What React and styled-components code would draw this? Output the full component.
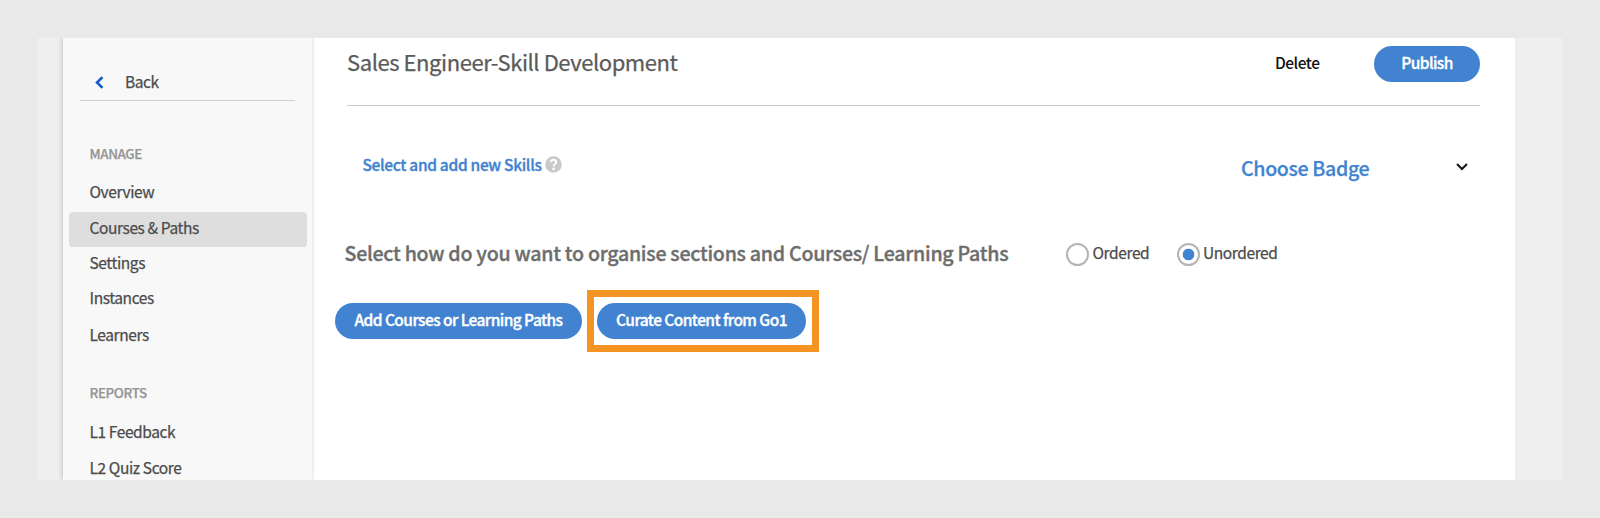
import React from "react";
import styled, { createGlobalStyle } from "styled-components";

const Global = createGlobalStyle`
  * { box-sizing: border-box; }
  body {
    margin: 0;
    background: #e9e9e9;
    font-family: "Noto Sans CJK SC", "Noto Sans", sans-serif;
    font-size: 15.5px;
    letter-spacing: -0.4px;
    color: #4b4b4b;
    -webkit-text-stroke: 0.25px currentColor;
  }
`;

const Page = styled.div`
  height: 518px;
  padding: 38px;
  overflow: hidden;
  background: #e9e9e9;
`;
const Frame = styled.div`
  display: flex;
  width: 1524px;
  height: 442px;
  padding-left: 25px;
  background: #efefef;
  overflow: hidden;
`;
const Window = styled.div`
  display: flex;
  width: 1452px;
  background: #fff;
  box-shadow: -1px 0 5px rgba(0, 0, 0, 0.16);
  clip-path: inset(0 0 0 -12px);
`;
const Sidebar = styled.nav`
  width: 249px;
  flex: none;
  padding: 25px 5.5px 0;
  background: #f8f8f8;
  box-shadow: 1px 0 3px rgba(0, 0, 0, 0.12);
`;
const Back = styled.div`
  display: flex;
  align-items: center;
  height: 38px;
  margin: 0 11.5px;
  padding: 0 0 2px 15px;
  border-bottom: 1.5px solid #cfcfcf;
  svg { margin: 3px 21px 0 0; }
`;
const Group = styled.div`
  height: 24px;
  margin: ${(p) => p.$top}px 0 ${(p) => p.$bottom}px;
  padding-left: 21px;
  line-height: 24px;
  font-size: 13.4px;
  font-weight: 500;
  color: #959595;
`;
const Item = styled.div`
  height: ${(p) => p.$h || 35.6}px;
  padding-left: 21px;
  border-radius: 4px;
  line-height: 31.6px;
  background: ${(p) => (p.$active ? "#dedede" : "transparent")};
`;
const Main = styled.main`
  flex: 1;
  padding: 0 35px;
`;
const Header = styled.header`
  display: flex;
  align-items: center;
  height: 68px;
  padding-bottom: 16px;
  border-bottom: 1.5px solid #cbcbcb;
`;
const Title = styled.h1`
  margin: 0;
  flex: 1;
  padding-bottom: 5px;
  font-size: 22px;
  font-weight: 400;
  line-height: 30px;
  letter-spacing: -0.43px;
  color: #5a5a5a;
`;
const Delete = styled.div`
  width: 99px;
  padding-bottom: 4px;
  font-weight: 500;
  letter-spacing: -0.5px;
  color: #111;
  -webkit-text-stroke: 0;
`;
const Button = styled.button`
  display: block;
  width: ${(p) => p.$w}px;
  height: ${(p) => p.$h}px;
  padding: 0 0 4px;
  border: 0;
  border-radius: 19px;
  background: #4183d1;
  color: #fff;
  font: 500 15.5px "Noto Sans CJK SC", sans-serif;
  letter-spacing: -0.56px;
  white-space: nowrap;
  -webkit-text-stroke: 0.35px currentColor;
`;
const Skills = styled.section`
  display: flex;
  align-items: center;
  height: 124px;
  padding: 0 12px 5px 15.5px;
`;
const SkillLink = styled.div`
  display: flex;
  align-items: center;
  flex: 1;
  color: #4183d1;
  font-weight: 500;
  letter-spacing: -0.32px;
  padding-bottom: 4px;
  -webkit-text-stroke: 0.35px currentColor;
  svg { margin: 2px 0 0 3.5px; }
`;
const Badge = styled.div`
  display: flex;
  align-items: center;
  width: 227px;
  justify-content: space-between;
  color: #4183d1;
  font-size: 19.6px;
  font-weight: 500;
  letter-spacing: -0.35px;
  padding-top: 3px;
  svg { margin-bottom: 1px; }
`;
const Organise = styled.section`
  display: flex;
  align-items: center;
  height: 48px;
  margin-left: -2.5px;
`;
const Question = styled.div`
  width: 721.5px;
  padding-bottom: 3px;
  font-size: 19.6px;
  font-weight: 500;
  letter-spacing: -0.265px;
  color: #6d6d6d;
  -webkit-text-stroke: 0.35px currentColor;
`;
const Radio = styled.label`
  display: flex;
  align-items: center;
  width: 110.5px;
  gap: 3.5px;
  line-height: 24px;
  white-space: nowrap;
  span { margin-bottom: 4px; }
`;
const Dot = styled.i`
  width: 23px;
  height: 23px;
  flex: none;
  border: 2px solid #b4b4b4;
  border-radius: 50%;
  background: ${(p) => (p.$on ? "radial-gradient(circle, #4183d1 5.4px, #fff 6.2px)" : "#fff")};
`;
const Actions = styled.section`
  display: flex;
  align-items: center;
  gap: 5px;
  margin: 12px 0 0 -12px;
`;
const Highlight = styled.div`
  padding: 5.5px 6px 5.5px 3px;
  border: 7px solid #f39423;
`;

export default function App() {
  return (
    <Page>
      <Global />
      <Frame>
        <Window>
          <Sidebar>
            <Back>
              <svg width="9" height="13" viewBox="0 0 9 13" fill="none" stroke="#1257cf" strokeWidth="2.5"><path d="M7.5 1.2L2 6.5l5.5 5.3" /></svg>
              <span>Back</span>
            </Back>
            <Group $top={40} $bottom={11}>MANAGE</Group>
            <Item>Overview</Item>
            <Item $active>Courses &amp; Paths</Item>
            <Item $h={35}>Settings</Item>
            <Item $h={36.6}>Instances</Item>
            <Item $h={35.6}>Learners</Item>
            <Group $top={26} $bottom={11.6}>REPORTS</Group>
            <Item>L1 Feedback</Item>
            <Item>L2 Quiz Score</Item>
          </Sidebar>
          <Main>
            <Header>
              <Title>Sales Engineer-Skill Development</Title>
              <Delete>Delete</Delete>
              <Button $w={106} $h={36}>Publish</Button>
            </Header>
            <Skills>
              <SkillLink>
                Select and add new Skills
                <svg width="17" height="17" viewBox="0 0 17 17" fill="none">
                  <circle cx="8.5" cy="8.5" r="8.3" fill="#c9c9c9" />
                  <path d="M5.8 6.3c.2-3.3 5.4-3.3 5.4-.2 0 2-2.6 1.9-2.6 4.2" stroke="#fff" strokeWidth="2.1" />
                  <circle cx="8.6" cy="12.9" r="1.35" fill="#fff" />
                </svg>
              </SkillLink>
              <Badge>
                Choose Badge
                <svg width="12" height="8" viewBox="0 0 12 8" fill="none" stroke="#151515" strokeWidth="2"><path d="M1 1l5 5 5-5" /></svg>
              </Badge>
            </Skills>
            <Organise>
              <Question>Select how do you want to organise sections and Courses/ Learning Paths</Question>
              <Radio><Dot /><span>Ordered</span></Radio>
              <Radio><Dot $on /><span>Unordered</span></Radio>
            </Organise>
            <Actions>
              <Button $w={247} $h={36.5}>Add Courses or Learning Paths</Button>
              <Highlight><Button $w={209} $h={36.5}>Curate Content from Go1</Button></Highlight>
            </Actions>
          </Main>
        </Window>
      </Frame>
    </Page>
  );
}
